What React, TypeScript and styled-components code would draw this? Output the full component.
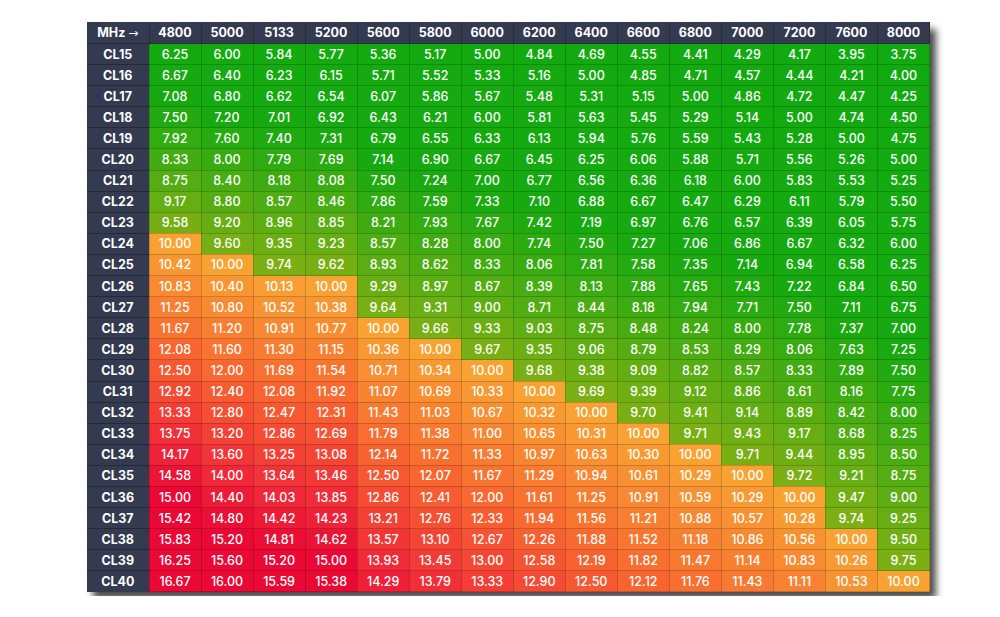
import React from "react";
import styled, { createGlobalStyle } from "styled-components";

const speeds = [4800, 5000, 5133, 5200, 5600, 5800, 6000, 6200, 6400, 6600, 6800, 7000, 7200, 7600, 8000];
const latencies = Array.from({ length: 26 }, (_, i) => 15 + i);

type Stop = [number, number, number, number];

// value -> rgb stops, green below 10ns, orange to red above
const greenStops: Stop[] = [
  [3, 16, 170, 16],
  [7.2, 22, 170, 16],
  [10, 134, 176, 20],
];
const hotStops: Stop[] = [
  [10, 248, 162, 50],
  [12, 248, 104, 48],
  [14, 240, 40, 56],
  [15, 234, 8, 52],
  [20, 234, 8, 52],
];

const lerpStops = (stops: Stop[], v: number) => {
  if (v <= stops[0][0]) return stops[0].slice(1);
  for (let i = 1; i < stops.length; i++) {
    const [x1, ...c1] = stops[i];
    const [x0, ...c0] = stops[i - 1];
    if (v <= x1) {
      const t = (v - x0) / (x1 - x0);
      return c0.map((c, k) => Math.round(c + (c1[k] - c) * t));
    }
  }
  return stops[stops.length - 1].slice(1);
};

const cellColor = (v: number) => {
  const rounded = Math.round(v * 100) / 100;
  const rgb = rounded < 10 ? lerpStops(greenStops, rounded) : lerpStops(hotStops, rounded);
  return `rgb(${rgb.join(",")})`;
};

const App = () => {
  return (
    <>
      <GlobalStyle />
      <Page>
        <Frame>
          <Table>
            <colgroup>
              <col style={{ width: 62 }} />
              {speeds.map((s) => (
                <col key={s} />
              ))}
            </colgroup>
            <thead>
              <tr>
                <HeadCell>
                  MHz <Arrow>→</Arrow>
                </HeadCell>
                {speeds.map((s) => (
                  <HeadCell key={s}>{s}</HeadCell>
                ))}
              </tr>
            </thead>
            <tbody>
              {latencies.map((cl) => (
                <tr key={cl}>
                  <RowLabel>CL{cl}</RowLabel>
                  {speeds.map((mhz) => {
                    const ns = (cl * 2000) / mhz;
                    return (
                      <ValueCell key={mhz} $bg={cellColor(ns)}>
                        {ns.toFixed(2)}
                      </ValueCell>
                    );
                  })}
                </tr>
              ))}
            </tbody>
          </Table>
        </Frame>
      </Page>
    </>
  );
};

const GlobalStyle = createGlobalStyle`
  body {
    margin: 0;
    background: #ffffff;
    font-family: Inter, "Noto Sans", sans-serif;
  }
`;

const Page = styled.div`
  padding: 22px 0 0 87px;
`;

const Frame = styled.div`
  display: inline-block;
  width: 843px;
  box-shadow: 6px 7px 7px rgba(0, 0, 0, 0.7);
`;

const Table = styled.table`
  display: table;
  width: 843px;
  table-layout: fixed;
  border-collapse: collapse;
  font-size: 12.5px;
  color: #ffffff;
`;

const HeadCell = styled.th`
  height: 21px;
  padding: 0;
  background: #343a4f;
  font-weight: 700;
  text-align: center;
  border-right: 1px solid rgba(0, 0, 0, 0.25);
`;

const Arrow = styled.span`
  font-family: "DejaVu Sans", sans-serif;
  font-weight: 400;
  font-size: 12px;
`;

const RowLabel = styled.th`
  height: 20.1px;
  padding: 0;
  background: #343a4f;
  font-weight: 700;
  text-align: center;
  border-top: 1px solid rgba(0, 0, 0, 0.3);
`;

const ValueCell = styled.td<{ $bg: string }>`
  height: 20.1px;
  padding: 0;
  background: ${(p) => p.$bg};
  text-align: center;
  font-weight: 500;
  border: 1px solid rgba(0, 0, 0, 0.18);
`;

export default App;
